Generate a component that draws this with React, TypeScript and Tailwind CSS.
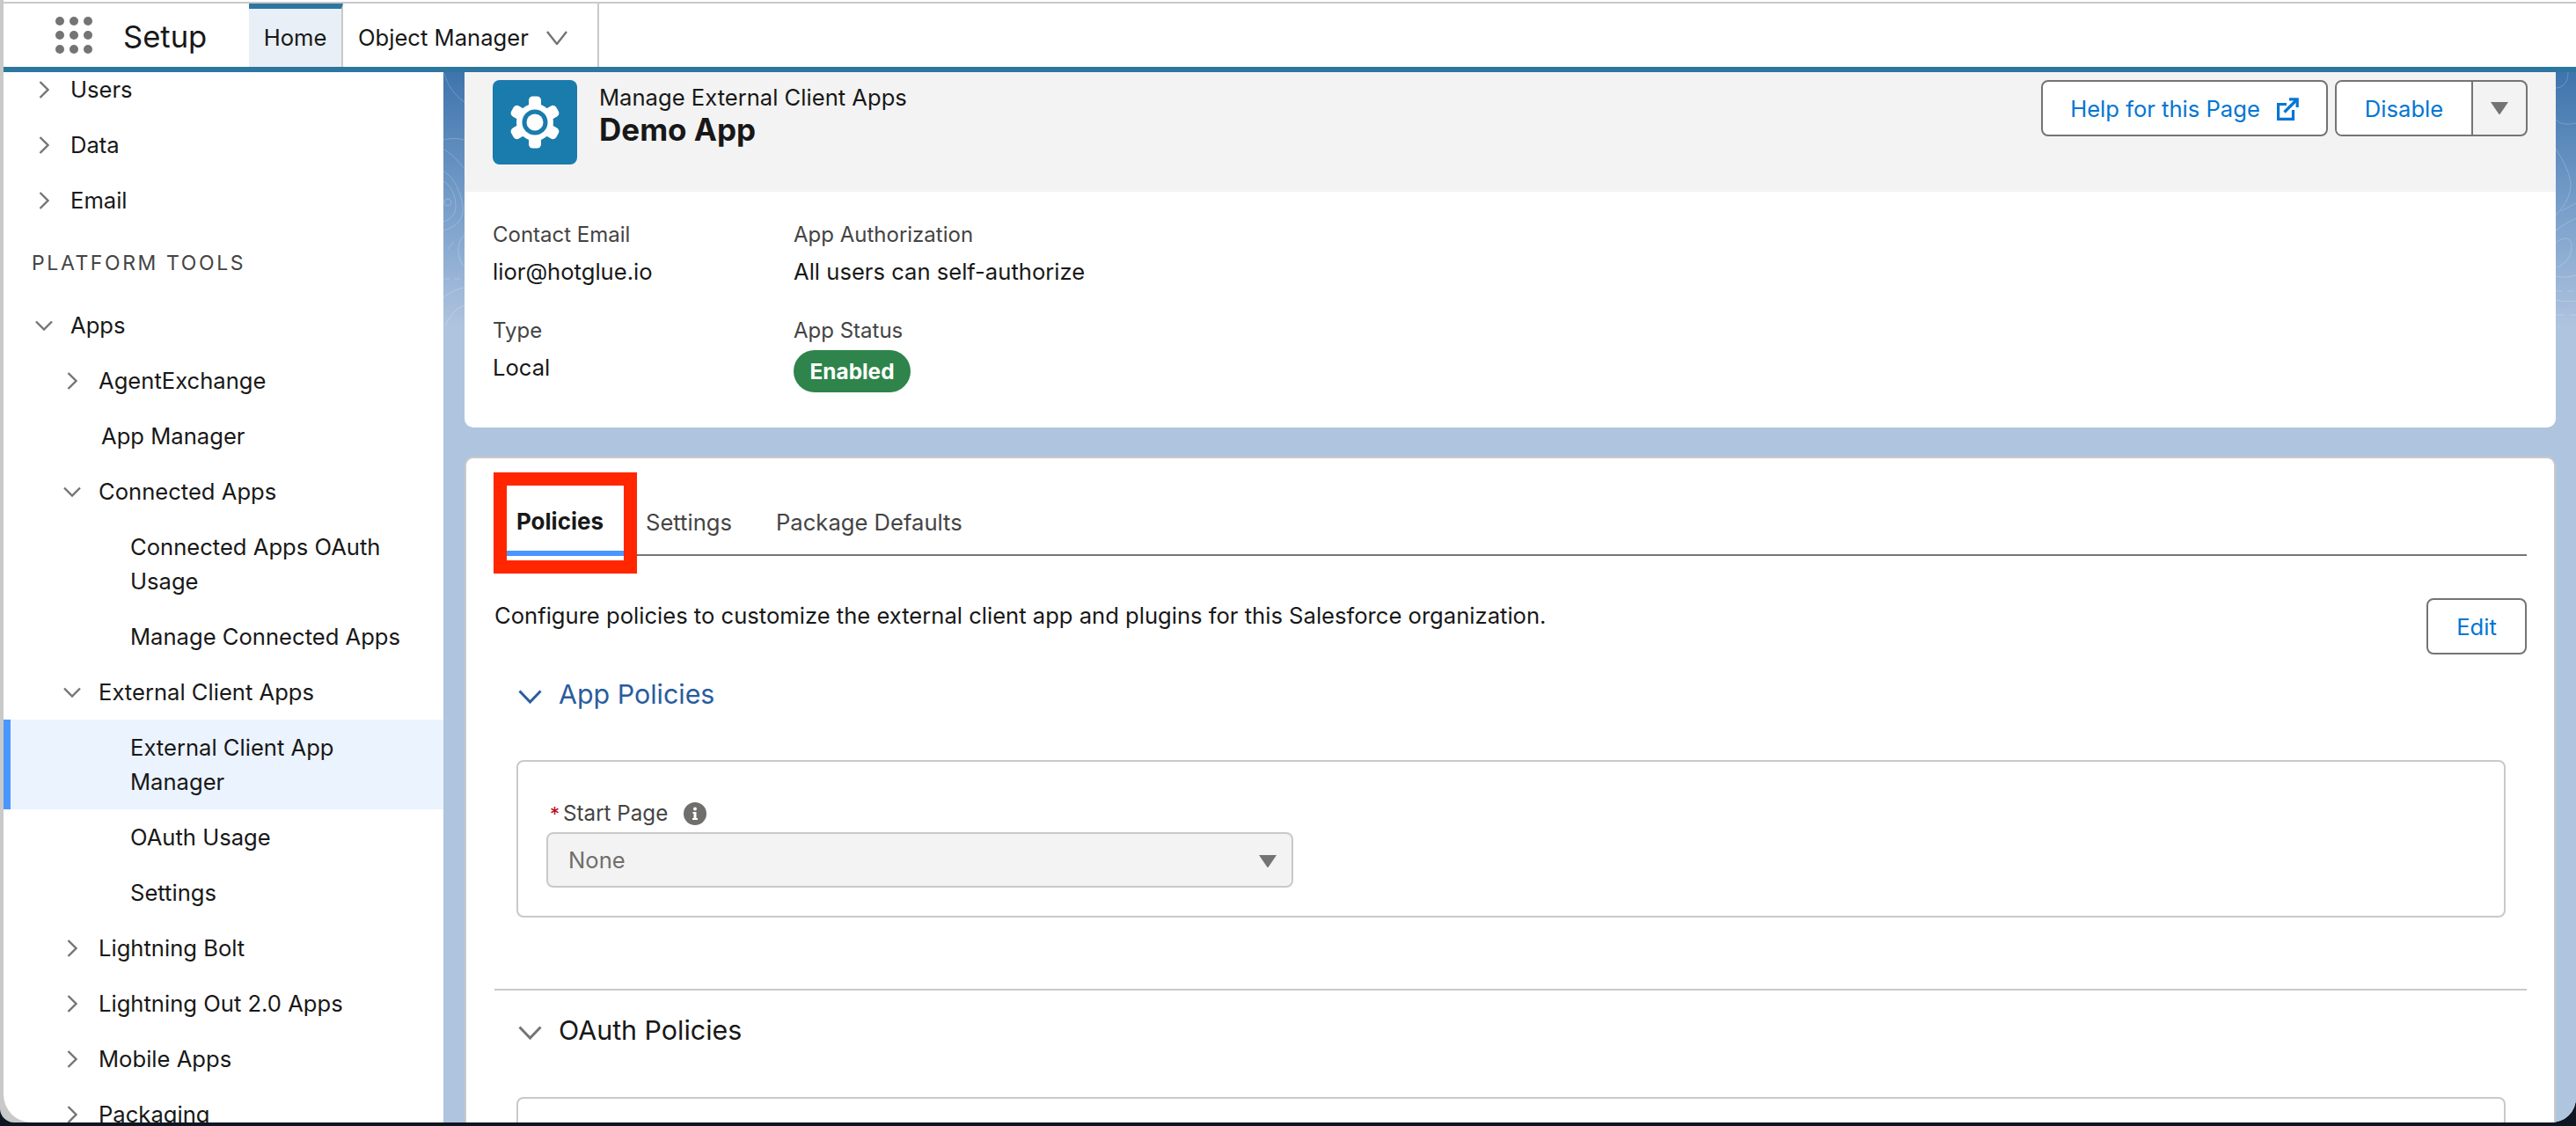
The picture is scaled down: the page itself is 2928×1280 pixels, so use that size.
type RowProps = {
  label: string;
  pad: string;
  chevron?: 'right' | 'down';
  active?: boolean;
};

const navTop: RowProps[] = [
  { label: 'Users', pad: 'pl-[34px]', chevron: 'right' },
  { label: 'Data', pad: 'pl-[34px]', chevron: 'right' },
  { label: 'Email', pad: 'pl-[34px]', chevron: 'right' },
];

const navTools: RowProps[] = [
  { label: 'Apps', pad: 'pl-[34px]', chevron: 'down' },
  { label: 'AgentExchange', pad: 'pl-[66px]', chevron: 'right' },
  { label: 'App Manager', pad: 'pl-[111px]' },
  { label: 'Connected Apps', pad: 'pl-[66px]', chevron: 'down' },
  { label: 'Connected Apps OAuth Usage', pad: 'pl-[144px]' },
  { label: 'Manage Connected Apps', pad: 'pl-[144px]' },
  { label: 'External Client Apps', pad: 'pl-[66px]', chevron: 'down' },
  { label: 'External Client App Manager', pad: 'pl-[144px]', active: true },
  { label: 'OAuth Usage', pad: 'pl-[144px]' },
  { label: 'Settings', pad: 'pl-[144px]' },
  { label: 'Lightning Bolt', pad: 'pl-[66px]', chevron: 'right' },
  { label: 'Lightning Out 2.0 Apps', pad: 'pl-[66px]', chevron: 'right' },
  { label: 'Mobile Apps', pad: 'pl-[66px]', chevron: 'right' },
  { label: 'Packaging', pad: 'pl-[66px]', chevron: 'right' },
];

function NavChevron({ dir }: { dir: 'right' | 'down' }) {
  return (
    <span className="mr-[18px] flex h-[39px] w-6 shrink-0 items-center justify-center">
      {dir === 'right' ? (
        <svg viewBox="0 0 12 20" className="h-5 w-3" fill="none" stroke="#747474" strokeWidth="2.4">
          <path d="M1.5 1l9 9-9 9" />
        </svg>
      ) : (
        <svg viewBox="0 0 20 12" className="h-3 w-5" fill="none" stroke="#747474" strokeWidth="2.4">
          <path d="M1 1.5l9 9 9-9" />
        </svg>
      )}
    </span>
  );
}

function NavRow({ label, pad, chevron, active }: RowProps) {
  return (
    <div
      className={`relative flex shrink-0 py-3 pr-[40px] text-[25.6px] leading-[39px] text-[#181818] ${pad} ${active ? 'bg-[#ebf3ff]' : ''}`}
    >
      {active && <span className="absolute inset-y-0 left-0 w-2 bg-[#4a96ff]" />}
      {chevron && <NavChevron dir={chevron} />}
      <span>{label}</span>
    </div>
  );
}

function Caret({ className }: { className: string }) {
  return (
    <svg viewBox="0 0 20 14" className={className} fill="#747474">
      <path d="M0 0h20L10.8 13.4a1 1 0 0 1-1.6 0z" />
    </svg>
  );
}

function GearIcon() {
  return (
    <svg viewBox="-30 -30 60 60" className="h-[60px] w-[60px]">
      <circle r="21" fill="#fff" />
      {[0, 60, 120, 180, 240, 300].map((deg) => (
        <rect key={deg} x="-7" y="-29.5" width="14" height="14" rx="4.5" fill="#fff" transform={`rotate(${deg})`} />
      ))}
      <circle r="14.5" fill="#1a7bad" />
      <circle r="9.5" fill="#fff" />
    </svg>
  );
}

function ExternalIcon() {
  return (
    <svg viewBox="0 0 26 26" className="h-[26px] w-[26px]" fill="none" stroke="#0176d3" strokeWidth="3.2">
      <path d="M12 7.5H2.6v16.9h16.9V14" />
      <path d="M9.5 16.5 24 2" />
      <path d="M15 1.8h9.2V11" />
    </svg>
  );
}

function InfoIcon() {
  return (
    <svg viewBox="0 0 26 26" className="h-[26px] w-[26px]">
      <circle cx="13" cy="13" r="13" fill="#706e6b" />
      <circle cx="13" cy="7.5" r="2" fill="#fff" />
      <path d="M10.5 11h4v7h1.5v2h-6v-2h1.5v-5h-1z" fill="#fff" />
    </svg>
  );
}

function StripLeft() {
  return (
    <svg viewBox="0 0 24 400" className="absolute top-0 left-0 h-[400px] w-[24px]" fill="none" stroke="#fff" strokeOpacity="0.22" strokeWidth="1">
      <path d="M1 1C4 14 12 26 24 34" />
      <path d="M0 77C8 75 16 75 24 77" />
      <path d="M1 88C8 92 16 100 24 110" />
      <path d="M0 113C12 118 20 138 22 152C24 168 14 176 0 180" />
      <path d="M0 124C8 128 14 140 14 152C14 162 8 168 0 170" />
      <circle cx="5" cy="148" r="4" />
      <path d="M24 185C19 190 16 198 17 205C18 212 20 218 24 222" />
      <path d="M5 201L12 193" />
      <path d="M0 235H24" strokeDasharray="7 5" />
      <path d="M0 256C8 250 16 246 24 245" />
      <path d="M2 288C8 276 15 268 24 265" />
    </svg>
  );
}

function StripRight() {
  return (
    <svg viewBox="0 0 23 400" className="absolute top-0 right-0 h-[400px] w-[23px]" fill="none" stroke="#fff" strokeOpacity="0.22" strokeWidth="1">
      <path d="M0 18C8 18 14 12 14 0" />
      <path d="M0 54C6 60 14 60 23 58" />
      <path d="M0 87C8 100 17 116 17 128C17 142 8 154 0 163" />
      <path d="M6 158L23 149" />
      <path d="M0 180C8 174 15 170 23 166" />
      <path d="M0 194C10 186 18 188 18 198C18 210 10 220 0 222" />
      <path d="M0 232C8 234 16 233 23 231" />
      <path d="M0 249H23" strokeDasharray="8 5" />
      <path d="M0 259C8 261 16 261 23 260" />
      <path d="M0 276H23" strokeDasharray="10 6" />
    </svg>
  );
}

function Field({ label, value }: { label: string; value: string }) {
  return (
    <div>
      <div className="text-[24px] leading-[30px] text-[#444444]">{label}</div>
      <div className="mt-3 text-[25.6px] leading-[30px] text-[#181818]">{value}</div>
    </div>
  );
}

function SectionHead({ label, tone }: { label: string; tone: 'blue' | 'gray' }) {
  return (
    <div className="flex h-12 items-center pl-[27px]">
      <svg
        viewBox="0 0 27 16"
        className={`mt-[6px] mr-[19px] h-4 w-[27px] shrink-0 ${tone === 'blue' ? 'text-[#2a5c9e]' : 'text-[#747474]'}`}
        fill="none"
        stroke="currentColor"
        strokeWidth="3"
      >
        <path d="M1.5 1.5l12 12.5 12-12.5" />
      </svg>
      <span className={`text-[30.4px] leading-[48px] ${tone === 'blue' ? 'text-[#2a5c9e]' : 'text-[#181818]'}`}>{label}</span>
    </div>
  );
}

export default function App() {
  return (
    <div className="h-[1280px] w-[2928px] overflow-hidden bg-[#0e1622] font-['Inter',sans-serif]">
      <div className="flex h-[1276px] flex-col overflow-hidden rounded-br-[28px] rounded-bl-[16px] border-l-4 border-[#c9c9c9] bg-[#c9c9c9]">
        <div className="h-[2px] shrink-0 bg-white" />
        <div className="h-[2px] shrink-0 bg-[#c9c9c9]" />
        <header className="flex h-[72px] shrink-0 bg-white">
          <div className="ml-[59px] grid h-[72px] w-[42px] grid-cols-3 content-center gap-[6px]">
            {Array.from({ length: 9 }).map((_, i) => (
              <span key={i} className="h-[10px] w-[10px] rounded-full bg-[#747474]" />
            ))}
          </div>
          <div className="ml-[35px] w-[143px] pt-[15px] text-[34.6px] leading-[44px] text-[#181818]">Setup</div>
          <div className="flex h-full w-[107px] items-center justify-center border-t-[6px] border-r-2 border-[#2d76a0] border-r-[#c9c9c9] bg-[#e8eff6] text-[25.6px] text-[#181818]">
            Home
          </div>
          <div className="flex h-full w-[291px] items-center border-r-2 border-[#c9c9c9] pt-[6px] pl-[17px] text-[25.6px] text-[#181818]">
            <span>Object Manager</span>
            <svg viewBox="0 0 24 16" className="ml-[20px] h-4 w-6" fill="none" stroke="#747474" strokeWidth="2.4">
              <path d="M1 1l11 14L23 1" />
            </svg>
          </div>
        </header>
        <div className="h-[6px] shrink-0 bg-[#2d76a0]" />

        <div className="flex min-h-0 flex-1">
          <aside className="flex w-[500px] shrink-0 flex-col overflow-hidden rounded-bl-[32px] bg-white">
            <div className="mt-[-12px] flex flex-col">
              {navTop.map((r) => (
                <NavRow key={r.label} {...r} />
              ))}
              <div className="flex h-[79px] shrink-0 items-center pt-[2px] pl-[32px] text-[23px] tracking-[2.6px] text-[#444444]">PLATFORM TOOLS</div>
              {navTools.map((r) => (
                <NavRow key={r.label} {...r} />
              ))}
            </div>
          </aside>

          <main className="relative min-w-0 flex-1 overflow-hidden bg-[#b0c4df] bg-[linear-gradient(180deg,#3e74ac_0px,#7aa0cb_160px,#afc4df_290px)] pr-[23px] pl-[24px]">
            <StripLeft />
            <StripRight />
            <section className="relative h-[404px] overflow-hidden rounded-b-[10px] bg-white">
              <div className="flex h-[136px] items-start bg-[#f3f3f3] pt-[9px] pr-[32px] pl-[32px]">
                <div className="flex h-[96px] w-[96px] shrink-0 items-center justify-center rounded-[8px] bg-[#1a7bad]">
                  <GearIcon />
                </div>
                <div className="ml-[25px] flex-1 pt-[3px]">
                  <div className="text-[25.6px] leading-[34px] text-[#181818]">Manage External Client Apps</div>
                  <div className="mt-[1px] text-[35px] leading-[36px] font-bold text-[#181818]">Demo App</div>
                </div>
                <button className="flex h-[64px] w-[326px] items-center justify-center rounded-[8px] border-2 border-[#747474] bg-white pt-[2px] text-[25.6px] text-[#0176d3]">
                  Help for this Page
                  <span className="ml-[18px]">
                    <ExternalIcon />
                  </span>
                </button>
                <div className="ml-2 flex h-[64px] w-[219px] overflow-hidden rounded-[8px] border-2 border-[#747474]">
                  <button className="flex w-[155px] items-center justify-center border-r-2 border-[#747474] bg-white pt-[2px] text-[25.6px] text-[#0176d3]">
                    Disable
                  </button>
                  <div className="flex flex-1 items-center justify-center">
                    <Caret className="h-[14px] w-[20px]" />
                  </div>
                </div>
              </div>
              <div className="grid grid-cols-[342px_1fr] gap-y-[37px] pt-[34px] pl-[32px]">
                <Field label="Contact Email" value="lior@hotglue.io" />
                <Field label="App Authorization" value="All users can self-authorize" />
                <Field label="Type" value="Local" />
                <div>
                  <div className="text-[24px] leading-[30px] text-[#444444]">App Status</div>
                  <div className="mt-[7px] flex h-[48px] w-[133px] items-center justify-center rounded-full bg-[#2e844a] text-[24.4px] font-bold text-white">
                    Enabled
                  </div>
                </div>
              </div>
            </section>

            <section className="relative mt-[33px] h-[800px] rounded-t-[10px] border-2 border-[#c9c9c9] bg-white pt-[35px] pr-[31px] pl-[32px]">
              <div className="flex h-[76px] border-b-2 border-[#747474] pl-[14px] text-[25.6px]">
                <div className="relative flex h-[76px] w-[133px] items-center justify-center border-b-[6px] border-[#4a96ff] bg-white pt-[2px] pr-[12px] text-[26px] font-bold text-[#181818]">
                  Policies
                  <span className="absolute -top-[19px] -right-[15px] -bottom-[26px] -left-[15px] border-[15px] border-[#ff2600]" />
                </div>
                <div className="ml-[25px] flex items-center pt-[2px] text-[#444444]">Settings</div>
                <div className="ml-[50px] flex items-center pt-[2px] text-[#444444]">Package Defaults</div>
              </div>

              <div className="mt-[48px] flex h-[64px] items-start justify-between">
                <div className="text-[25.6px] leading-[40px] text-[#181818]">
                  Configure policies to customize the external client app and plugins for this Salesforce organization.
                </div>
                <button className="h-[64px] w-[114px] rounded-[8px] border-2 border-[#747474] bg-white pt-[2px] text-[25.6px] text-[#0176d3]">Edit</button>
              </div>

              <div className="mt-[21px]">
                <SectionHead label="App Policies" tone="blue" />
              </div>

              <div className="mt-[51px] mr-[24px] ml-[25px] h-[179px] rounded-[8px] border-2 border-[#c9c9c9] pt-[44px] pl-[32px]">
                <div className="flex h-[30px] items-center text-[24.2px] text-[#444444]">
                  <span className="w-[19px] pl-[4px] text-[22px] text-[#ba0517]">*</span>
                  Start Page
                  <span className="ml-[18px]">
                    <InfoIcon />
                  </span>
                </div>
                <div className="mt-[6px] flex h-[63px] w-[849px] items-center justify-between rounded-[8px] border-2 border-[#c9c9c9] bg-[#f3f3f3] pt-[2px] pr-[17px] pl-[23px] text-[25.6px] text-[#706e6b]">
                  None
                  <Caret className="h-[14px] w-[20px]" />
                </div>
              </div>

              <div className="mt-[81px] h-[2px] bg-[#c9c9c9]" />

              <div className="mt-[21px]">
                <SectionHead label="OAuth Policies" tone="gray" />
              </div>

              <div className="mt-[52px] mr-[24px] ml-[25px] h-[200px] rounded-[8px] border-2 border-[#c9c9c9]" />
            </section>
          </main>
        </div>
      </div>
    </div>
  );
}
